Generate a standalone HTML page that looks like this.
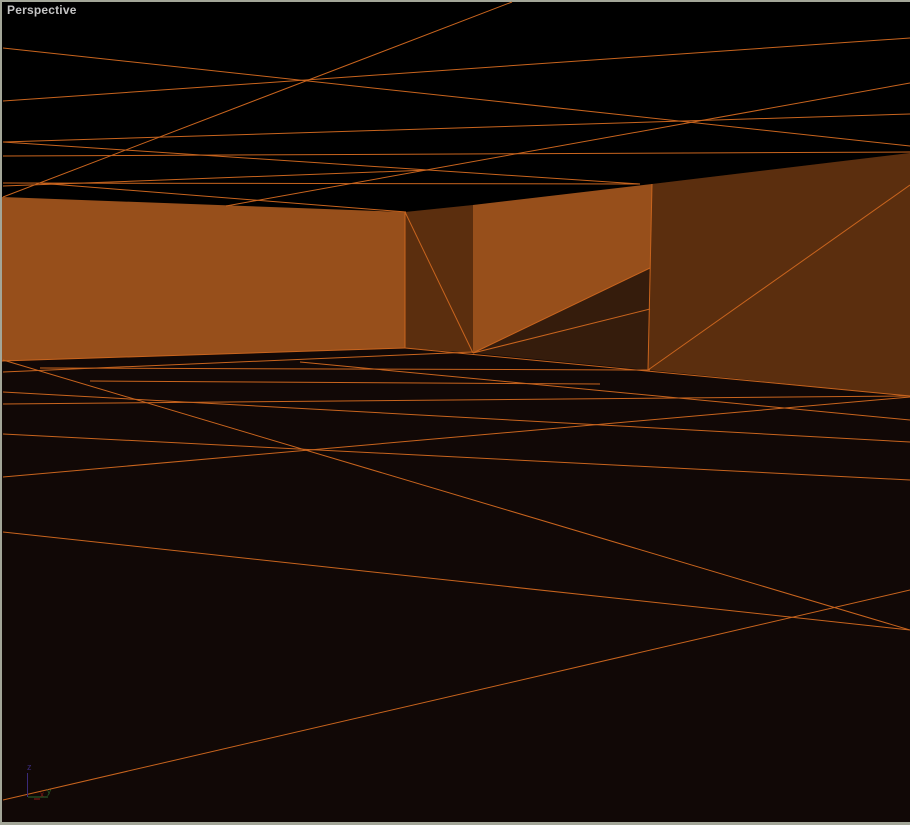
<!DOCTYPE html>
<html><head><style>
html,body{margin:0;padding:0;width:910px;height:825px;overflow:hidden;background:#a3a698;}
svg{position:absolute;left:0;top:0;}
.l{position:absolute;left:7px;top:3px;font:bold 12px "Liberation Sans",sans-serif;color:#c4c4c4;letter-spacing:0.2px;}
</style></head><body>
<svg width="910" height="825" viewBox="0 0 910 825">
<rect x="0" y="0" width="910" height="825" fill="#a3a698"/>
<rect x="2" y="2" width="908" height="820" fill="#000"/>
<polygon points="2,200 405,212 473,205 652,184 910,153 910,822 2,822" fill="#110806"/>
<polygon points="2,197 405,212 405,348 2,361" fill="#974f1b"/>
<polygon points="405,212 473,205 473,353 405,348" fill="#5b2e0e"/>
<polygon points="473,205 652,184 650,268 473,353" fill="#974f1b"/>
<polygon points="473,353 650,268 648,370" fill="#351c0c"/>
<polygon points="652,184 910,153 910,396 648,370" fill="#5b2e0e"/>
<g stroke="#c8641e" stroke-width="1" fill="none">
<line x1="405" y1="212" x2="473" y2="353"/>
<line x1="405" y1="212" x2="405" y2="348"/>
<line x1="652" y1="184" x2="648" y2="370"/>
<line x1="473" y1="353" x2="650" y2="309"/>
<line x1="473" y1="353" x2="650" y2="268"/>
<line x1="648" y1="370" x2="910" y2="185"/>
<line x1="2" y1="361" x2="405" y2="348"/>
<line x1="405" y1="348" x2="910" y2="396"/>
<line x1="3" y1="197" x2="512" y2="2"/>
<line x1="3" y1="48" x2="910" y2="146"/>
<line x1="3" y1="101" x2="910" y2="38"/>
<line x1="3" y1="142" x2="910" y2="114"/>
<line x1="3" y1="156" x2="910" y2="152"/>
<line x1="3" y1="142" x2="640" y2="184"/>
<line x1="226" y1="206" x2="910" y2="83"/>
<line x1="3" y1="183" x2="640" y2="184"/>
<line x1="38" y1="183" x2="406" y2="212"/>
<line x1="3" y1="186" x2="430" y2="170"/>
<line x1="3" y1="360" x2="910" y2="630"/>
<line x1="3" y1="372" x2="473" y2="352"/>
<line x1="3" y1="392" x2="910" y2="442"/>
<line x1="3" y1="404" x2="910" y2="396"/>
<line x1="3" y1="434" x2="910" y2="480"/>
<line x1="3" y1="477" x2="910" y2="397"/>
<line x1="3" y1="532" x2="910" y2="630"/>
<line x1="3" y1="800" x2="910" y2="590"/>
<line x1="40" y1="368" x2="650" y2="370"/>
<line x1="300" y1="362" x2="910" y2="420"/>
<line x1="90" y1="381" x2="600" y2="384"/>
</g>
<line x1="27.5" y1="773" x2="27.5" y2="797" stroke="#3a2a78" stroke-width="1"/>
<text x="27" y="770" font-family="Liberation Sans,sans-serif" font-size="9" fill="#3a2a78">z</text>
<line x1="28" y1="797" x2="48" y2="797" stroke="#2d6a2d"/>
<line x1="34" y1="799" x2="40" y2="799" stroke="#8a1a1a" stroke-width="1"/>
<text x="40" y="797" font-family="Liberation Sans,sans-serif" font-size="8" fill="#8a1a1a">x</text>
<text x="47" y="794" font-family="Liberation Sans,sans-serif" font-size="8" fill="#2d6a2d">y</text>
</svg>
<div class="l">Perspective</div>
</body></html>
